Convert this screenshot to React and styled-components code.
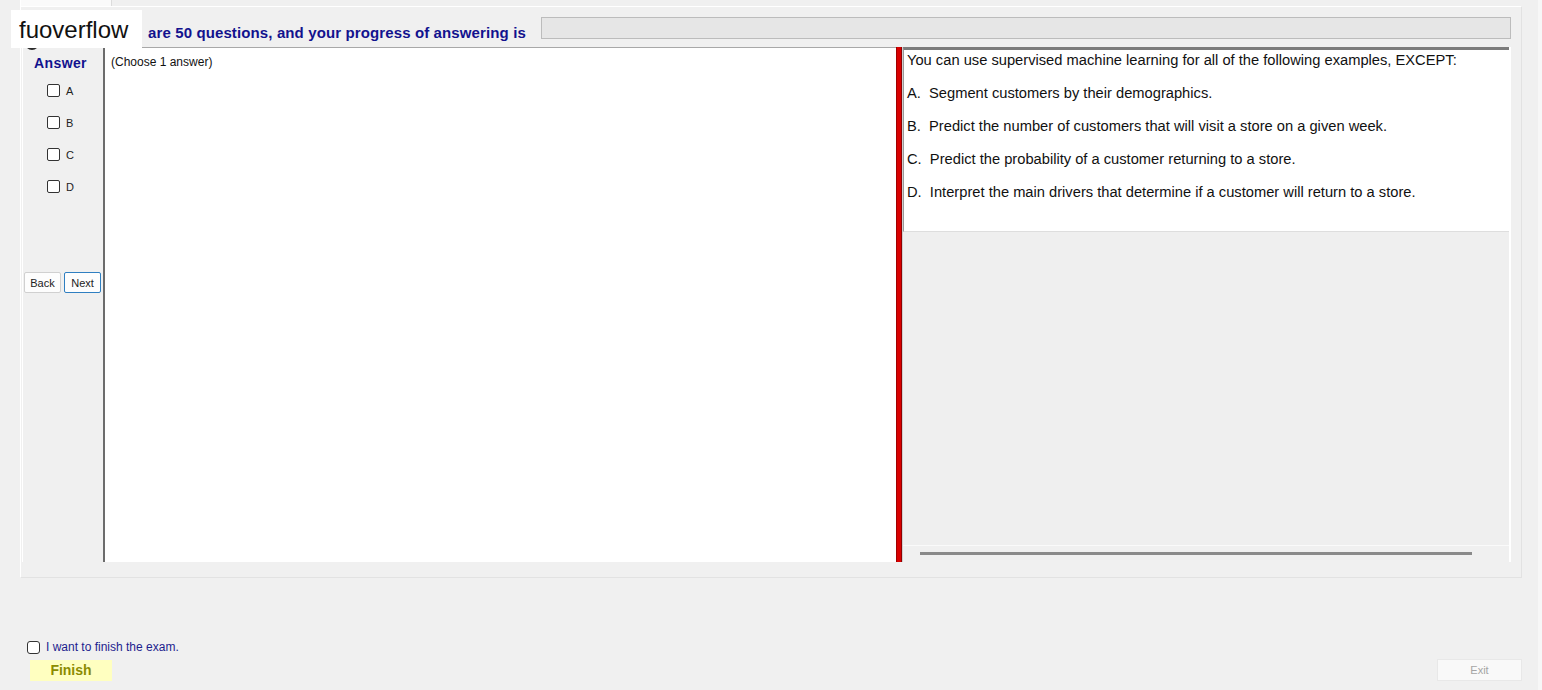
import React from 'react'
import styled, { createGlobalStyle } from 'styled-components'

const GlobalStyle = createGlobalStyle`
    html, body {
        margin: 0;
        padding: 0;
        background: #f7f7f7;
    }
    body {
        font-family: "Liberation Sans", Arial, sans-serif;
    }
`

const options = [
    { key: 'A', text: 'Segment customers by their demographics.' },
    { key: 'B', text: 'Predict the number of customers that will visit a store on a given week.' },
    { key: 'C', text: 'Predict the probability of a customer returning to a store.' },
    { key: 'D', text: 'Interpret the main drivers that determine if a customer will return to a store.' },
]

function App () {
    return (
        <>
            <GlobalStyle />
            <Window>
                <TabStrip>
                    <Tab />
                </TabStrip>
                <TabPanel>
                    <Brand>fuoverflow</Brand>
                    <Dot />
                    <Header>
                        <HeaderText>are 50 questions, and your progress of answering is</HeaderText>
                        <Progress />
                    </Header>
                    <Main>
                        <AnswerColumn>
                            <AnswerTitle>Answer</AnswerTitle>
                            <OptionList>
                                {options.map(o => (
                                    <OptionRow key={o.key}>
                                        <Box />
                                        <span>{o.key}</span>
                                    </OptionRow>
                                ))}
                            </OptionList>
                            <NavRow>
                                <NavButton>Back</NavButton>
                                <NavButton focused>Next</NavButton>
                            </NavRow>
                        </AnswerColumn>
                        <AnswerPane>(Choose 1 answer)</AnswerPane>
                        <Splitter />
                        <QuestionSide>
                            <QuestionBox>
                                <QuestionLine>You can use supervised machine learning for all of the following examples, EXCEPT:</QuestionLine>
                                {options.map(o => (
                                    <QuestionLine key={o.key}>{o.key}.&nbsp; {o.text}</QuestionLine>
                                ))}
                            </QuestionBox>
                            <QuestionBlank />
                            <ScrollStrip>
                                <ScrollThumb />
                            </ScrollStrip>
                        </QuestionSide>
                    </Main>
                </TabPanel>
                <Footer>
                    <FinishCheck>
                        <Box round />
                        <span>I want to finish the exam.</span>
                    </FinishCheck>
                    <BottomRow>
                        <FinishButton>Finish</FinishButton>
                        <ExitButton>Exit</ExitButton>
                    </BottomRow>
                </Footer>
            </Window>
        </>
    )
}
export default App

const Window = styled.div`
    width: 1538px;
    height: 690px;
    background: #f0f0f0;
    display: flex;
    flex-direction: column;
    box-sizing: border-box;
`

const TabStrip = styled.div`
    height: 6px;
    padding-left: 20px;
    display: flex;
`

const Tab = styled.div`
    width: 90px;
    height: 6px;
    background: #fafafa;
    border-right: 1px solid #dcdcdc;
    border-left: 1px solid #ffffff;
`

const TabPanel = styled.div`
    position: relative;
    margin-left: 20px;
    width: 1502px;
    height: 572px;
    box-sizing: border-box;
    border: 1px solid #ffffff;
    border-right-color: #e2e2e2;
    border-bottom-color: #e2e2e2;
    padding: 10px 10px 0 1px;
    display: flex;
    flex-direction: column;
`

const Brand = styled.div`
    position: absolute;
    left: -10px;
    top: 3px;
    width: 131px;
    height: 38px;
    background: #ffffff;
    color: #111111;
    font-size: 24px;
    line-height: 40px;
    padding-left: 8px;
    box-sizing: border-box;
    z-index: 2;
`

const Dot = styled.div`
    position: absolute;
    left: 4px;
    top: 29px;
    width: 14px;
    height: 14px;
    border-radius: 50%;
    background: #2a2a2a;
    z-index: 1;
`

const Header = styled.div`
    height: 24px;
    display: flex;
    align-items: flex-start;
    padding-left: 126px;
`

const HeaderText = styled.div`
    color: #12128e;
    font-weight: bold;
    font-size: 15px;
    line-height: 15px;
    letter-spacing: 0.12px;
    margin-top: 8px;
    width: 393px;
    white-space: nowrap;
`

const Progress = styled.div`
    flex: 1;
    height: 22px;
    background: #e6e6e6;
    border: 1px solid #bcbcbc;
    box-sizing: border-box;
`

const Main = styled.div`
    margin-top: 6px;
    height: 515px;
    display: flex;
`

const AnswerColumn = styled.div`
    width: 81px;
    display: flex;
    flex-direction: column;
    align-items: flex-start;
    padding-left: 1px;
    box-sizing: border-box;
    border-left: 1px solid #ffffff;
`

const AnswerTitle = styled.div`
    color: #12128e;
    font-weight: bold;
    font-size: 14px;
    letter-spacing: 0.4px;
    margin-top: 8px;
    margin-left: 10px;
`

const OptionList = styled.div`
    display: flex;
    flex-direction: column;
    gap: 19px;
    margin-top: 13px;
    margin-left: 23px;
`

const OptionRow = styled.div`
    display: flex;
    align-items: center;
    gap: 6px;
    font-size: 11px;
    color: #222222;
    height: 13px;
`

const Box = styled.div`
    width: 11px;
    height: 11px;
    border: 1px solid #333333;
    border-radius: ${p => (p.round ? '3px' : '2px')};
    background: #ffffff;
`

const NavRow = styled.div`
    margin-top: 79px;
    display: flex;
    gap: 3px;
    margin-left: 0;
`

const NavButton = styled.div`
    width: 37px;
    height: 21px;
    box-sizing: border-box;
    background: #fdfdfd;
    border: 1px solid ${p => (p.focused ? '#2f7fc1' : '#d0d0d0')};
    border-radius: 2px;
    font-size: 11px;
    color: #222222;
    display: flex;
    align-items: center;
    justify-content: center;
`

const AnswerPane = styled.div`
    width: 793px;
    background: #ffffff;
    border-left: 2px solid #6c6c6c;
    border-top: 1px solid #a8a8a8;
    padding: 7px 0 0 6px;
    font-size: 12px;
    color: #111111;
    box-sizing: border-box;
`

const Splitter = styled.div`
    width: 6px;
    background: #d90000;
    border-left: 1px solid #a00000;
    border-right: 1px solid #900000;
    box-sizing: border-box;
`

const QuestionSide = styled.div`
    flex: 1;
    display: flex;
    flex-direction: column;
    border-left: 1px solid #cfcfcf;
    border-right: 2px solid #ffffff;
`

const QuestionBox = styled.div`
    height: 185px;
    background: #ffffff;
    border-top: 3px solid #7c7c7c;
    border-left: 1px solid #9a9a9a;
    border-bottom: 1px solid #dedede;
    box-sizing: border-box;
    padding: 2px 0 0 3px;
    display: flex;
    flex-direction: column;
    gap: 17px;
`

const QuestionLine = styled.div`
    font-size: 14.7px;
    line-height: 16px;
    color: #111111;
    white-space: nowrap;
`

const QuestionBlank = styled.div`
    flex: 1;
    background: #efefef;
`

const ScrollStrip = styled.div`
    height: 17px;
    border-top: 1px solid #fafafa;
    background: #f0f0f0;
    padding: 6px 0 0 17px;
    box-sizing: border-box;
`

const ScrollThumb = styled.div`
    width: 552px;
    height: 3px;
    background: #8a8a8a;
`

const Footer = styled.div`
    flex: 1;
    display: flex;
    flex-direction: column;
    padding: 62px 16px 0 27px;
`

const FinishCheck = styled.div`
    display: flex;
    align-items: center;
    gap: 6px;
    font-size: 12px;
    color: #1d1d8e;
`

const BottomRow = styled.div`
    margin-top: 5px;
    display: flex;
    justify-content: space-between;
    align-items: center;
`

const FinishButton = styled.div`
    margin-left: 3px;
    width: 82px;
    height: 21px;
    background: #ffffc0;
    color: #8c8c00;
    font-weight: bold;
    font-size: 14px;
    display: flex;
    align-items: center;
    justify-content: center;
`

const ExitButton = styled.div`
    width: 85px;
    height: 22px;
    background: #f9f9f9;
    border: 1px solid #e8e8e8;
    box-sizing: border-box;
    color: #a5a5a5;
    font-size: 11px;
    display: flex;
    align-items: center;
    justify-content: center;
`
